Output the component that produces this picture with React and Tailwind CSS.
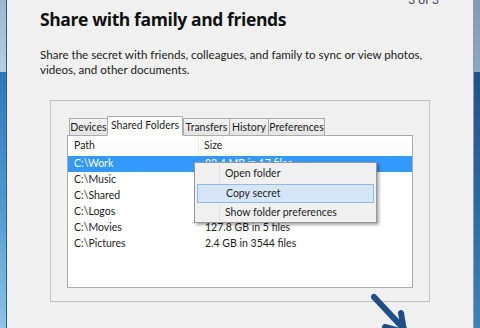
import React from "react";

const rows = [
  { path: "C:\\Work", size: "82.4 MB in 17 files", selected: true },
  { path: "C:\\Music", size: "" },
  { path: "C:\\Shared", size: "" },
  { path: "C:\\Logos", size: "" },
  { path: "C:\\Movies", size: "127.8 GB in 5 files" },
  { path: "C:\\Pictures", size: "2.4 GB in 3544 files" },
];

const tabs = [
  { label: "Devices", w: "w-[39px]" },
  { label: "Shared Folders", w: "w-[76px]", active: true },
  { label: "Transfers", w: "w-[47px]" },
  { label: "History", w: "w-[40px]" },
  { label: "Preferences", w: "w-[57px]" },
];

export default function App() {
  return (
    <div className="relative w-[480px] h-[328px] overflow-hidden bg-[#f0f0f0] flex text-[#1e1e1e] font-['Lato','Open_Sans',sans-serif]">
      {/* left window frame */}
      <div className="w-[7px] flex">
        <div className="w-[6px] flex flex-col">
          <div className="h-[72px] bg-gradient-to-b from-[#9db8d2] to-[#b7cde2]" />
          <div className="flex-1 bg-gradient-to-b from-[#2f78b8] via-[#4d97cf] to-[#8cc4e8]" />
        </div>
        <div className="w-px bg-[#2a5d92]" />
      </div>

      {/* content */}
      <div className="flex-1 flex flex-col">
        <div className="flex justify-end pr-[34px] h-0">
          <span className="text-[12px] leading-none -mt-[6px] text-[#3c4a5e]">3 of 3</span>
        </div>
        <h1 className="ml-[33px] mt-[8px] text-[17.5px] leading-[22px] font-bold text-[#111] font-['Open_Sans',sans-serif] tracking-[-0.4px]">
          Share with family and friends
        </h1>
        <p className="ml-[33px] mt-[17px] text-[11.6px] leading-[15px] text-[#222] w-[420px]">
          Share the secret with friends, colleagues, and family to sync or view photos, videos, and other documents.
        </p>

        {/* group box */}
        <div className="ml-[43px] mt-[23px] w-[380px] h-[202px] border border-[#c4c4c4] pl-[16px] pt-[14px]">
          <div className="flex items-end h-[20px] pl-[2px]">
            {tabs.map((t) =>
              t.active ? (
                <div
                  key={t.label}
                  className={`${t.w} h-[20px] -mb-px relative z-10 bg-white border border-[#acacac] border-b-white text-[10.5px] leading-[16px] text-center whitespace-nowrap`}
                >
                  {t.label}
                </div>
              ) : (
                <div
                  key={t.label}
                  className={`${t.w} h-[17px] bg-gradient-to-b from-[#f2f2f2] to-[#e4e4e4] border border-[#acacac] border-b-0 -mr-px text-[10.5px] leading-[16px] text-center whitespace-nowrap`}
                >
                  {t.label}
                </div>
              )
            )}
          </div>
          <div className="w-[346px] h-[153px] bg-white border border-[#acacac]">
            <div className="flex h-[20px] items-center text-[10.5px] bg-gradient-to-b from-white to-[#fbfbfb]">
              <div className="w-[131px] pl-[6px] border-r border-[#ececec] h-full flex items-center">Path</div>
              <div className="pl-[5px]">Size</div>
            </div>
            {rows.map((r) => (
              <div
                key={r.path}
                className={`flex h-[16px] items-center text-[10.5px] ${r.selected ? "bg-[#3399ff] text-white" : ""}`}
              >
                <div className="w-[132px] pl-[6px]">{r.path}</div>
                <div className="pl-[5px]">{r.size}</div>
              </div>
            ))}
          </div>
        </div>
      </div>

      {/* right window frame */}
      <div className="w-[7px] flex">
        <div className="w-px bg-[#9a9a9a]" />
        <div className="flex-1 flex flex-col">
          <div className="h-[72px] bg-gradient-to-b from-[#7e9ab6] to-[#8fa9c3]" />
          <div className="flex-1 bg-gradient-to-b from-[#1f528c] via-[#2d68a6] to-[#3f80bd]" />
        </div>
      </div>

      {/* context menu */}
      <div className="absolute left-[194px] top-[162px] w-[183px] h-[61px] bg-[#f0f0f0] border border-[#979797] shadow-[2px_2px_3px_rgba(0,0,0,0.35)] py-[1px] px-[1px] text-[10.5px]">
        <div className="absolute left-[24px] top-[2px] bottom-[2px] w-px bg-[#e0e0e0]" />
        <div className="relative h-[20px] flex items-center pl-[29px]">Open folder</div>
        <div className="relative h-[19px] mx-px flex items-center pl-[28px] bg-[#d5e6f7] border border-[#8fbcea]">Copy secret</div>
        <div className="relative h-[19px] flex items-center pl-[29px]">Show folder preferences</div>
      </div>

      {/* annotation arrow */}
      <svg className="absolute left-[360px] top-[285px]" width="60" height="43" viewBox="0 0 60 43">
        <g stroke="#1d4e88" strokeWidth="6" strokeLinecap="round" fill="none">
          <line x1="14" y1="12" x2="44" y2="44" />
          <line x1="41" y1="28" x2="44" y2="46" />
          <line x1="25" y1="42" x2="40" y2="46" />
        </g>
      </svg>
    </div>
  );
}
